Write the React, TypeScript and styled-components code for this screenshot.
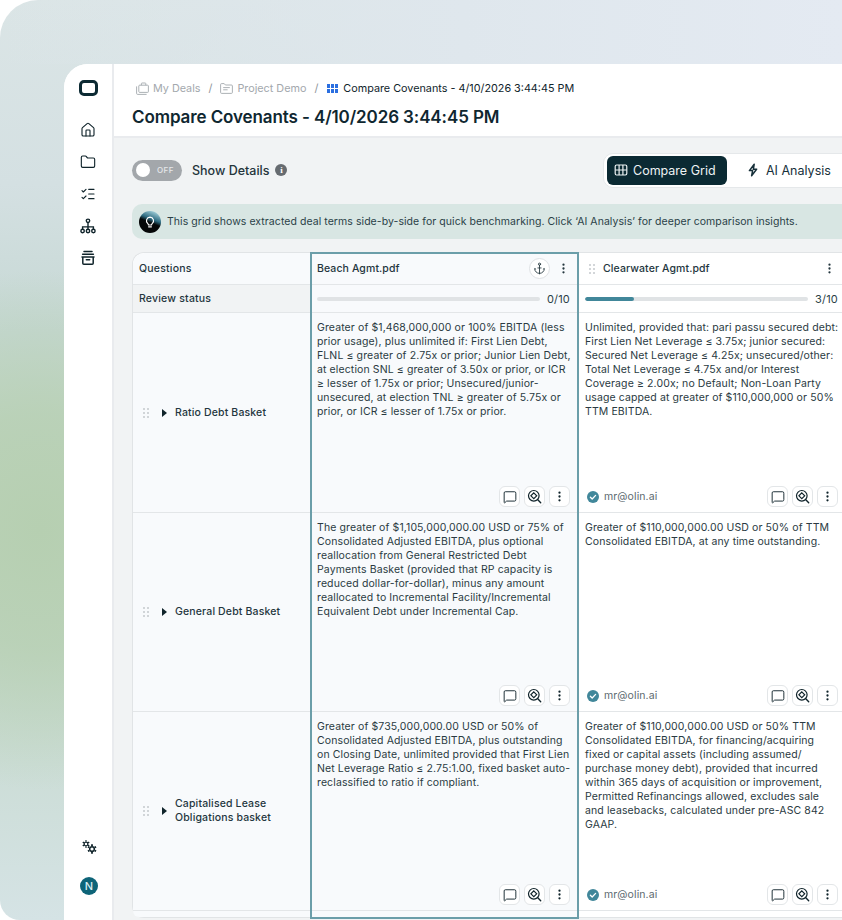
import React from "react";
import styled, { createGlobalStyle } from "styled-components";
import { House, Folder, ListChecks, Anchor, MessageSquare, EllipsisVertical } from "lucide-react";

const Global = createGlobalStyle`
  html, body { margin: 0; padding: 0; background: #fff; }
  body { width: 842px; height: 920px; overflow: hidden; font-family: Inter, "Liberation Sans", sans-serif; color: #10242b; -webkit-font-smoothing: antialiased; }
  * { box-sizing: border-box; }
`;

const Stage = styled.div`
  width: 842px; height: 920px; overflow: hidden; padding: 64px 0 0 64px;
  border-radius: 38px 0 0 20px;
  background:
    radial-gradient(ellipse 230px 260px at 40px 530px, #b6cfb1 0%, rgba(182,207,177,0.75) 45%, rgba(182,207,177,0) 100%),
    linear-gradient(180deg, #dbe5e6 0%, #d4e0e2 20%, #c6d8d4 36%, #c4d8c6 55%, #c6d9cd 72%, #d5e3e5 100%);
  position: relative;
  &::before {
    content: ""; position: absolute; inset: 0 0 auto 0; height: 64px;
    background: linear-gradient(90deg, rgba(222,232,235,0) 0%, #dfe7ed 55%, #e4eaf2 100%);
  }
`;
const Panel = styled.div`
  position: relative; width: 778px; height: 856px; background: #fff;
  border-top-left-radius: 24px; display: flex; overflow: hidden;
`;
const Sidebar = styled.nav`
  width: 50px; flex: none; border-right: 2px solid #e9ebee; background: #fff;
  display: flex; flex-direction: column; align-items: center; padding-top: 16px;
  height: 100%;
`;
const Logo = styled.div`
  width: 19px; height: 16px; border: 3px solid #0c2a33; border-radius: 5px; margin-bottom: 26px;
`;
const NavIcons = styled.div`
  display: flex; flex-direction: column; gap: 16px; color: #10242b; align-items: center;
  svg { display: block; }
`;
const SideBottom = styled.div`
  margin-top: auto; display: flex; flex-direction: column; align-items: center; gap: 23px; padding-bottom: 25px;
`;
const Avatar = styled.div`
  width: 18px; height: 18px; border-radius: 50%; background: #0e6478; color: #d8eef2; margin-left: 2px;
  font-size: 11px; font-weight: 500; display: flex; align-items: center; justify-content: center;
`;
const Main = styled.div`
  width: 728px; flex: none; display: flex; flex-direction: column; min-height: 0;
`;
const Header = styled.header`
  height: 74px; flex: none; background: #fff; border-bottom: 2px solid #e9ebee; padding: 15px 0 0 18px;
`;
const Crumbs = styled.div`
  display: flex; align-items: center; height: 18px; font-size: 10.8px; color: #a3a8ad; padding-left: 4px;
`;
const Crumb = styled.span<{ $current?: boolean }>`
  display: inline-flex; align-items: center; gap: ${(p) => (p.$current ? "5px" : "4px")};
  color: ${(p) => (p.$current ? "#10242b" : "#a3a8ad")};
  margin-left: ${(p) => (p.$current ? "1px" : "0")};
`;
const Slash = styled.span`
  margin: 0 8px; color: #8f959a; font-size: 11px;
`;
const Title = styled.h1`
  margin: 8px 0 0; font-size: 17px; line-height: 24px; font-weight: 600; color: #0f2730; letter-spacing: -0.1px;
`;
const Content = styled.div`
  flex: 1; min-height: 0; background: #f1f3f4; padding: 19px 0 0 18px;
  display: flex; flex-direction: column; overflow: hidden;
`;
const Toolbar = styled.div`
  height: 26px; width: 720px; display: flex; align-items: center; flex: none;
`;
const Toggle = styled.div`
  width: 50px; height: 21px; border-radius: 11px; background: #a3a7ab; display: flex; align-items: center;
  padding-left: 4px; gap: 7px; color: #e6e8ea; font-size: 8px; font-weight: 500; letter-spacing: 0.4px;
  &::before { content: ""; width: 14px; height: 14px; border-radius: 50%; background: #fff; }
`;
const ToggleLabel = styled.span`
  margin-left: 10px; font-size: 12.5px; font-weight: 500; color: #24343b;
`;
const InfoDot = styled.span`
  margin-left: 6px; width: 12px; height: 12px; border-radius: 50%; background: #666b70; color: #fff;
  font-size: 9px; font-weight: 700; line-height: 12px; text-align: center; font-family: "Liberation Serif", serif;
`;
const Tabs = styled.div`
  margin-left: auto; height: 35px; background: #fff; border: 1px solid #e5e8ea; border-radius: 10px 0 0 10px;
  padding: 2px 3px; display: flex; width: 249px; flex: none;
`;
const Tab = styled.div<{ $active?: boolean }>`
  height: 29px; border-radius: 6px; display: flex; align-items: center; gap: ${(p) => (p.$active ? "5px" : "6px")};
  font-size: 12.5px; font-weight: 400; padding: 0 10px 0 7px; flex: none; width: ${(p) => (p.$active ? "120px" : "auto")};
  background: ${(p) => (p.$active ? "#0b2a33" : "transparent")};
  color: ${(p) => (p.$active ? "#eef3f4" : "#17303a")};
  margin-left: ${(p) => (p.$active ? 0 : "12px")};
`;
const Banner = styled.div`
  margin-top: 21px; height: 35px; flex: none; width: 720px; background: #d8e6e3; border-radius: 10px 0 0 10px;
  display: flex; align-items: center; padding-left: 7px; gap: 6px; font-size: 10.5px; color: #2a3f47; letter-spacing: 0.06px;
`;
const Grid = styled.div`
  position: relative; margin-top: 13px; width: 714px; display: grid; flex: none;
  grid-template-columns: 178px 268px 268px; grid-template-rows: 32px 28px 200px 199px 199px 6px;
  background: #fff; border: 1px solid #e1e4e6; border-right: none; border-radius: 12px 0 0 12px;
`;
const Cell = styled.div<{ $tint?: boolean; $grey?: boolean; $noRule?: boolean; $foot?: boolean }>`
  min-width: 0; border-bottom: ${(p) => (p.$noRule ? "none" : "1px solid #e3e6e8")};
  background: ${(p) => (p.$grey ? "#f1f3f4" : p.$tint ? "#f8fafc" : "#fff")};
  ${(p) => p.$foot && "border-bottom-left-radius: 12px;"}
`;
const HeadCell = styled(Cell)<{ $first?: boolean }>`
  display: flex; align-items: center; padding: 0 6px; font-size: 10.5px; font-weight: 500; color: #24363e; letter-spacing: 0.2px;
  ${(p) => p.$first && "border-top-left-radius: 12px;"}
`;
const ColumnHead = styled(HeadCell)`
  padding: 0 8px 0 10px;
`;
const Grip = styled.span`
  display: inline-grid; grid-template-columns: 2px 2px; gap: 2px 2px; width: 6px; margin-right: 8px; flex: none;
  i { width: 2px; height: 2px; border-radius: 50%; background: #c4c8cc; display: block; }
`;
const FileName = styled.span`
  flex: 1; font-size: 10.5px; font-weight: 500; letter-spacing: 0.1px; color: #24363e;
`;
const AnchorBtn = styled.span`
  width: 21px; height: 21px; border: 1px solid #dfe2e5; border-radius: 50%; background: #fff; display: flex; align-items: center; justify-content: center; margin-right: 5px;
`;
const MoreHead = styled.span`
  width: 16px; display: flex; justify-content: center; margin-right: 2px;
`;
const ProgressCell = styled(Cell)`
  display: flex; align-items: center; padding: 0 9px 0 6px; gap: 7px; font-size: 11px; color: #2a3f47; letter-spacing: 0.2px;
`;
const Track = styled.div`
  flex: 1; height: 4px; border-radius: 2px; background: #e0e3e5; overflow: hidden;
`;
const Fill = styled.div`
  height: 100%; background: #41879a; border-radius: 2px;
`;
const QuestionCell = styled(Cell)`
  display: flex; align-items: center; padding: 0 6px 0 10px; font-size: 10.5px; font-weight: 500; line-height: 14px; color: #24363e; letter-spacing: 0.15px;
`;
const Caret = styled.span`
  width: 0; height: 0; border-left: 5px solid #10242b; border-top: 4px solid transparent; border-bottom: 4px solid transparent; margin: 0 8px 0 5px; flex: none;
`;
const AnswerCell = styled(Cell)`
  display: flex; flex-direction: column; padding: 8px 8px 5px 6px;
`;
const Answer = styled.p`
  margin: 0; font-size: 10.5px; line-height: 14px; color: #2a3a42; letter-spacing: 0.11px; flex: 1;
`;
const ActionRow = styled.div`
  display: flex; align-items: center; justify-content: flex-end; gap: 4px; height: 21px; margin-right: 1px;
`;
const Reviewer = styled.span`
  display: flex; align-items: center; gap: 5px; margin-right: auto; margin-left: 2px; font-size: 10.5px; color: #5d6a70; letter-spacing: 0.1px;
`;
const ActionBtn = styled.span`
  width: 21px; height: 21px; border: 1px solid #e3e6e8; border-radius: 6px; background: #fff; display: flex; align-items: center; justify-content: center; color: #10242b;
`;
const Selected = styled.div`
  position: absolute; left: 177px; top: -1px; width: 269px; height: 667px; border: 2px solid #6b9ea9; pointer-events: none;
`;

const dots = [0, 1, 2, 3, 4, 5];
const DragDots = () => <Grip>{dots.map((d) => <i key={d} />)}</Grip>;

const Bulb = () => (
  <svg width="22" height="22" viewBox="0 0 22 22">
    <defs>
      <linearGradient id="orb" x1="0.7" y1="0" x2="0.3" y2="1">
        <stop offset="0" stopColor="#a5d2dc" />
        <stop offset="0.36" stopColor="#2d6a80" />
        <stop offset="0.52" stopColor="#050708" />
        <stop offset="1" stopColor="#050708" />
      </linearGradient>
    </defs>
    <circle cx="11" cy="11" r="11" fill="url(#orb)" />
    <path d="M11 6.2a3.6 3.6 0 0 0-2.2 6.4c.5.4.7.9.7 1.4h3c0-.5.2-1 .7-1.4A3.6 3.6 0 0 0 11 6.2z" fill="none" stroke="#fff" strokeWidth="1.2" />
    <path d="M9.6 15.8h2.8" stroke="#fff" strokeWidth="1.2" strokeLinecap="round" />
  </svg>
);
const Hierarchy = () => (
  <svg width="16" height="16" viewBox="0 0 16 16" fill="none" stroke="#10242b" strokeWidth="1.4">
    <circle cx="8" cy="2.8" r="1.7" />
    <circle cx="2.6" cy="13" r="1.7" />
    <circle cx="8" cy="13" r="1.7" />
    <circle cx="13.4" cy="13" r="1.7" />
    <path d="M8 4.5v6.8M2.6 11.3V8.9h10.8v2.4" />
  </svg>
);
const ArchiveBox = () => (
  <svg width="16" height="16" viewBox="0 0 16 16" fill="none" stroke="#10242b" strokeWidth="1.5" strokeLinecap="round">
    <path d="M4 1.6h8" />
    <path d="M2.6 4.3h10.8" />
    <path d="M2 7h12M2.8 7v6.2a1 1 0 0 0 1 1h8.4a1 1 0 0 0 1-1V7" />
    <path d="M6.3 9.7h3.4" />
  </svg>
);
const Gear = ({ size }: { size: number }) => (
  <svg width={size} height={size} viewBox="0 0 12 12" fill="none" stroke="#10242b">
    <circle cx="6" cy="6" r="2.8" strokeWidth="1.8" />
    <path d="M6 .4v2M6 9.6v2M1.15 3.2l1.7 1M9.15 7.8l1.7 1M1.15 8.8l1.7-1M9.15 4.2l1.7-1" strokeWidth="2.2" />
  </svg>
);
const Gears = styled.div`
  width: 15px; height: 14px; position: relative; margin-left: 3px;
  svg:first-child { position: absolute; left: 0; top: 0; }
  svg:last-child { position: absolute; right: 0; bottom: 0; }
`;
const Scan = () => (
  <svg width="15" height="15" viewBox="0 0 15 15" fill="none" stroke="#10242b" strokeWidth="1.2" strokeLinecap="round">
    <circle cx="6.8" cy="6.8" r="5.3" />
    <path d="M6.8 3.9l2.9 2.9-2.9 2.9-2.9-2.9z" />
    <path d="M10.8 10.8l2.9 2.9" strokeWidth="1.4" />
  </svg>
);
const Verified = () => (
  <svg width="12" height="12" viewBox="0 0 12 12">
    <circle cx="6" cy="6" r="6" fill="#41879a" />
    <path d="M3.4 6.2l1.8 1.8 3.4-3.6" fill="none" stroke="#fff" strokeWidth="1.3" strokeLinecap="round" strokeLinejoin="round" />
  </svg>
);
const Deals = () => (
  <svg width="13" height="13" viewBox="0 0 13 13" fill="none" stroke="#a3a8ad" strokeWidth="0.9">
    <rect x="2.8" y="3.2" width="9.6" height="7.2" rx="0.8" />
    <path d="M5.4 3.2V1.6a.6.6 0 0 1 .6-.6h3.2a.6.6 0 0 1 .6.6v1.6" />
    <path d="M.6 4.4v7a1 1 0 0 0 1 1h9" />
  </svg>
);
const ProjectFolder = () => (
  <svg width="13" height="11" viewBox="0 0 13 11" fill="none" stroke="#a3a8ad" strokeWidth="0.9">
    <path d="M.6 1.6a1 1 0 0 1 1-1h2.6l1.2 1.4h6a1 1 0 0 1 1 1v6.4a1 1 0 0 1-1 1h-9.8a1 1 0 0 1-1-1z" />
    <path d="M3.2 4.6h6.6M3.2 6.8h4.4" />
  </svg>
);
const TableIcon = () => (
  <svg width="14" height="14" viewBox="0 0 14 14" fill="none" stroke="#eef3f4" strokeWidth="1.2">
    <rect x="1.2" y="2" width="11.6" height="10" rx="1.4" />
    <path d="M1.2 7h11.6M5.1 2v10M8.9 2v10" />
  </svg>
);
const Bolt = () => (
  <svg width="14" height="14" viewBox="0 0 14 14" fill="none" stroke="#17303a" strokeWidth="1.5" strokeLinejoin="round">
    <path d="M8.2 1.2L3.4 7.6h3.2l-1 5.2 5-6.6H7.4z" />
  </svg>
);
const BlueGrid = styled.span`
  display: inline-grid; grid-template-columns: repeat(3, 3px); grid-template-rows: repeat(2, 4px); gap: 1px; width: 11px;
  i { background: #2b6fe0; display: block; }
`;

const Actions = ({ reviewer }: { reviewer?: boolean }) => (
  <ActionRow>
    {reviewer && (
      <Reviewer>
        <Verified />
        mr@olin.ai
      </Reviewer>
    )}
    <ActionBtn><MessageSquare size={14} strokeWidth={1.6} /></ActionBtn>
    <ActionBtn><Scan /></ActionBtn>
    <ActionBtn><EllipsisVertical size={13} strokeWidth={2.2} /></ActionBtn>
  </ActionRow>
);

const rows = [
  {
    q: "Ratio Debt Basket",
    a: "Greater of $1,468,000,000 or 100% EBITDA (less prior usage), plus unlimited if: First Lien Debt, FLNL ≤ greater of 2.75x or prior; Junior Lien Debt, at election SNL ≤ greater of 3.50x or prior, or ICR ≥ lesser of 1.75x or prior; Unsecured/junior-unsecured, at election TNL ≥ greater of 5.75x or prior, or ICR ≤ lesser of 1.75x or prior.",
    b: "Unlimited, provided that: pari passu secured debt: First Lien Net Leverage ≤ 3.75x; junior secured: Secured Net Leverage ≤ 4.25x; unsecured/other: Total Net Leverage ≤ 4.75x and/or Interest Coverage ≥ 2.00x; no Default; Non-Loan Party usage capped at greater of $110,000,000 or 50% TTM EBITDA.",
  },
  {
    q: "General Debt Basket",
    a: "The greater of $1,105,000,000.00 USD or 75% of Consolidated Adjusted EBITDA, plus optional reallocation from General Restricted Debt Payments Basket (provided that RP capacity is reduced dollar-for-dollar), minus any amount reallocated to Incremental Facility/Incremental Equivalent Debt under Incremental Cap.",
    b: "Greater of $110,000,000.00 USD or 50% of TTM Consolidated EBITDA, at any time outstanding.",
  },
  {
    q: "Capitalised Lease Obligations basket",
    a: "Greater of $735,000,000.00 USD or 50% of Consolidated Adjusted EBITDA, plus outstanding on Closing Date, unlimited provided that First Lien Net Leverage Ratio ≤ 2.75:1.00, fixed basket auto-reclassified to ratio if compliant.",
    b: "Greater of $110,000,000.00 USD or 50% TTM Consolidated EBITDA, for financing/acquiring fixed or capital assets (including assumed/\u200Bpurchase money debt), provided that incurred within 365 days of acquisition or improvement, Permitted Refinancings allowed, excludes sale and leasebacks, calculated under pre-ASC 842 GAAP.",
  },
];

export default function App() {
  return (
    <Stage>
      <Global />
      <Panel>
        <Sidebar>
          <Logo />
          <NavIcons>
            <House size={16} strokeWidth={1.7} />
            <Folder size={16} strokeWidth={1.7} />
            <ListChecks size={16} strokeWidth={1.7} />
            <Hierarchy />
            <ArchiveBox />
          </NavIcons>
          <SideBottom>
            <Gears><Gear size={8} /><Gear size={10} /></Gears>
            <Avatar>N</Avatar>
          </SideBottom>
        </Sidebar>
        <Main>
          <Header>
            <Crumbs>
              <Crumb><Deals />My Deals</Crumb>
              <Slash>/</Slash>
              <Crumb><ProjectFolder />Project Demo</Crumb>
              <Slash>/</Slash>
              <Crumb $current><BlueGrid>{dots.map((d) => <i key={d} />)}</BlueGrid>Compare Covenants - 4/10/2026 3:44:45 PM</Crumb>
            </Crumbs>
            <Title>Compare Covenants - 4/10/2026 3:44:45 PM</Title>
          </Header>
          <Content>
            <Toolbar>
              <Toggle>OFF</Toggle>
              <ToggleLabel>Show Details</ToggleLabel>
              <InfoDot>i</InfoDot>
              <Tabs>
                <Tab $active><TableIcon />Compare Grid</Tab>
                <Tab><Bolt />AI Analysis</Tab>
              </Tabs>
            </Toolbar>
            <Banner>
              <Bulb />
              This grid shows extracted deal terms side-by-side for quick benchmarking. Click ‘AI Analysis’ for deeper comparison insights.
            </Banner>
            <Grid>
              <HeadCell $first $tint>Questions</HeadCell>
              <HeadCell $tint>
                <FileName>Beach Agmt.pdf</FileName>
                <AnchorBtn><Anchor size={13} strokeWidth={1.6} /></AnchorBtn>
                <MoreHead><EllipsisVertical size={13} strokeWidth={2.2} /></MoreHead>
              </HeadCell>
              <ColumnHead>
                <DragDots />
                <FileName>Clearwater Agmt.pdf</FileName>
                <MoreHead><EllipsisVertical size={13} strokeWidth={2.2} /></MoreHead>
              </ColumnHead>
              <HeadCell $grey>Review status</HeadCell>
              <ProgressCell $tint><Track />0/10</ProgressCell>
              <ProgressCell><Track><Fill style={{ width: "22%" }} /></Track>3/10</ProgressCell>
              {rows.map((r) => (
                <React.Fragment key={r.q}>
                  <QuestionCell $tint><DragDots /><Caret />{r.q}</QuestionCell>
                  <AnswerCell $tint><Answer>{r.a}</Answer><Actions /></AnswerCell>
                  <AnswerCell><Answer>{r.b}</Answer><Actions reviewer /></AnswerCell>
                </React.Fragment>
              ))}
              <Cell $noRule $tint $foot />
              <Cell $noRule $tint />
              <Cell $noRule />
              <Selected />
            </Grid>
          </Content>
        </Main>
      </Panel>
    </Stage>
  );
}
